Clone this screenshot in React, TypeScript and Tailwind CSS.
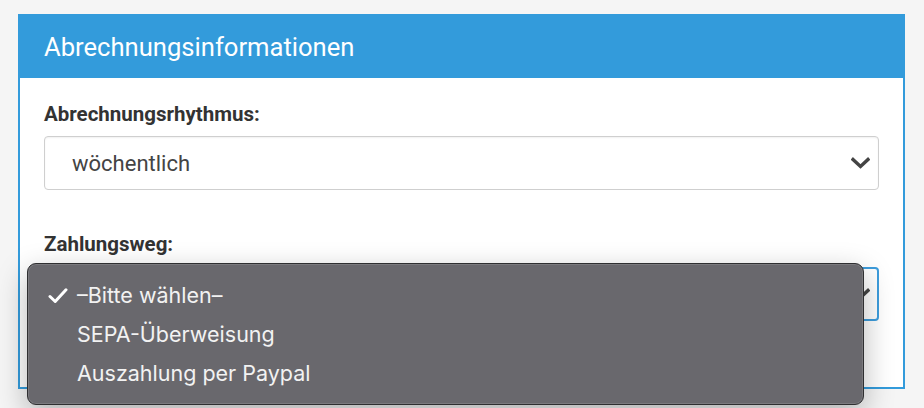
import React from "react";

function Chevron() {
  return (
    <svg width="19" height="12" viewBox="0 0 19 12" className="shrink-0">
      <path d="M2 2.5 L9.5 9.5 L17 2.5" fill="none" stroke="#444" strokeWidth="3.4" strokeLinecap="square" />
    </svg>
  );
}

function Check() {
  return (
    <svg width="20" height="16" viewBox="0 0 20 16" className="shrink-0">
      <path d="M2 8.5 L7.2 13.5 L18 1.8" fill="none" stroke="#ffffff" strokeWidth="3" strokeLinecap="round" strokeLinejoin="round" />
    </svg>
  );
}

export default function App() {
  return (
    <div className="relative min-h-screen bg-[#f5f5f5] pt-[14px] pl-[18px]" style={{ fontFamily: "Roboto, 'Liberation Sans', sans-serif" }}>
      <div className="w-[887px] border-2 border-[#339bdb] bg-white">
        <div className="flex h-[62px] items-center bg-[#339bdb] pl-[24px] pb-[1px]">
          <span className="text-[25.6px] leading-[30px] text-white">Abrechnungsinformationen</span>
        </div>
        <div className="flex flex-col px-[24px] pt-[24px] pb-[66px]">
          <label className="text-[20.5px] font-bold leading-[24px] text-[#333]">Abrechnungsrhythmus:</label>
          <div className="mt-[10px] flex h-[54px] items-center justify-between rounded-[4px] border border-[#cfcfcf] pl-[27px] pr-[8px] shadow-[inset_0_1px_2px_rgba(0,0,0,0.06)]">
            <span className="text-[22px] text-[#444]">wöchentlich</span>
            <Chevron />
          </div>
          <label className="mt-[42px] text-[20.5px] font-bold leading-[24px] text-[#333]">Zahlungsweg:</label>
          <div className="mt-[11px] flex h-[54px] items-center justify-end rounded-[4px] border-2 border-[#3d9ddd] pr-[7px]">
            <Chevron />
          </div>
        </div>
      </div>

      <div
        className="absolute left-[27px] top-[263px] flex h-[142px] w-[837px] flex-col rounded-[9px] border border-[#2f2f31] bg-[#69686d] pt-[12px] shadow-[0_10px_30px_rgba(0,0,0,0.28),inset_0_0_0_1px_rgba(255,255,255,0.12)]"
        style={{ fontFamily: "Inter, 'Noto Sans', sans-serif" }}
      >
        <div className="flex h-[39px] items-center pl-[20px]">
          <div className="w-[29px]"><Check /></div>
          <span className="text-[21.5px] text-[#f2f2f2]">–Bitte wählen–</span>
        </div>
        <div className="flex h-[39px] items-center pl-[49px]">
          <span className="text-[21.5px] text-[#f2f2f2]">SEPA-Überweisung</span>
        </div>
        <div className="flex h-[39px] items-center pl-[49px]">
          <span className="text-[21.5px] text-[#f2f2f2]">Auszahlung per Paypal</span>
        </div>
      </div>
    </div>
  );
}
